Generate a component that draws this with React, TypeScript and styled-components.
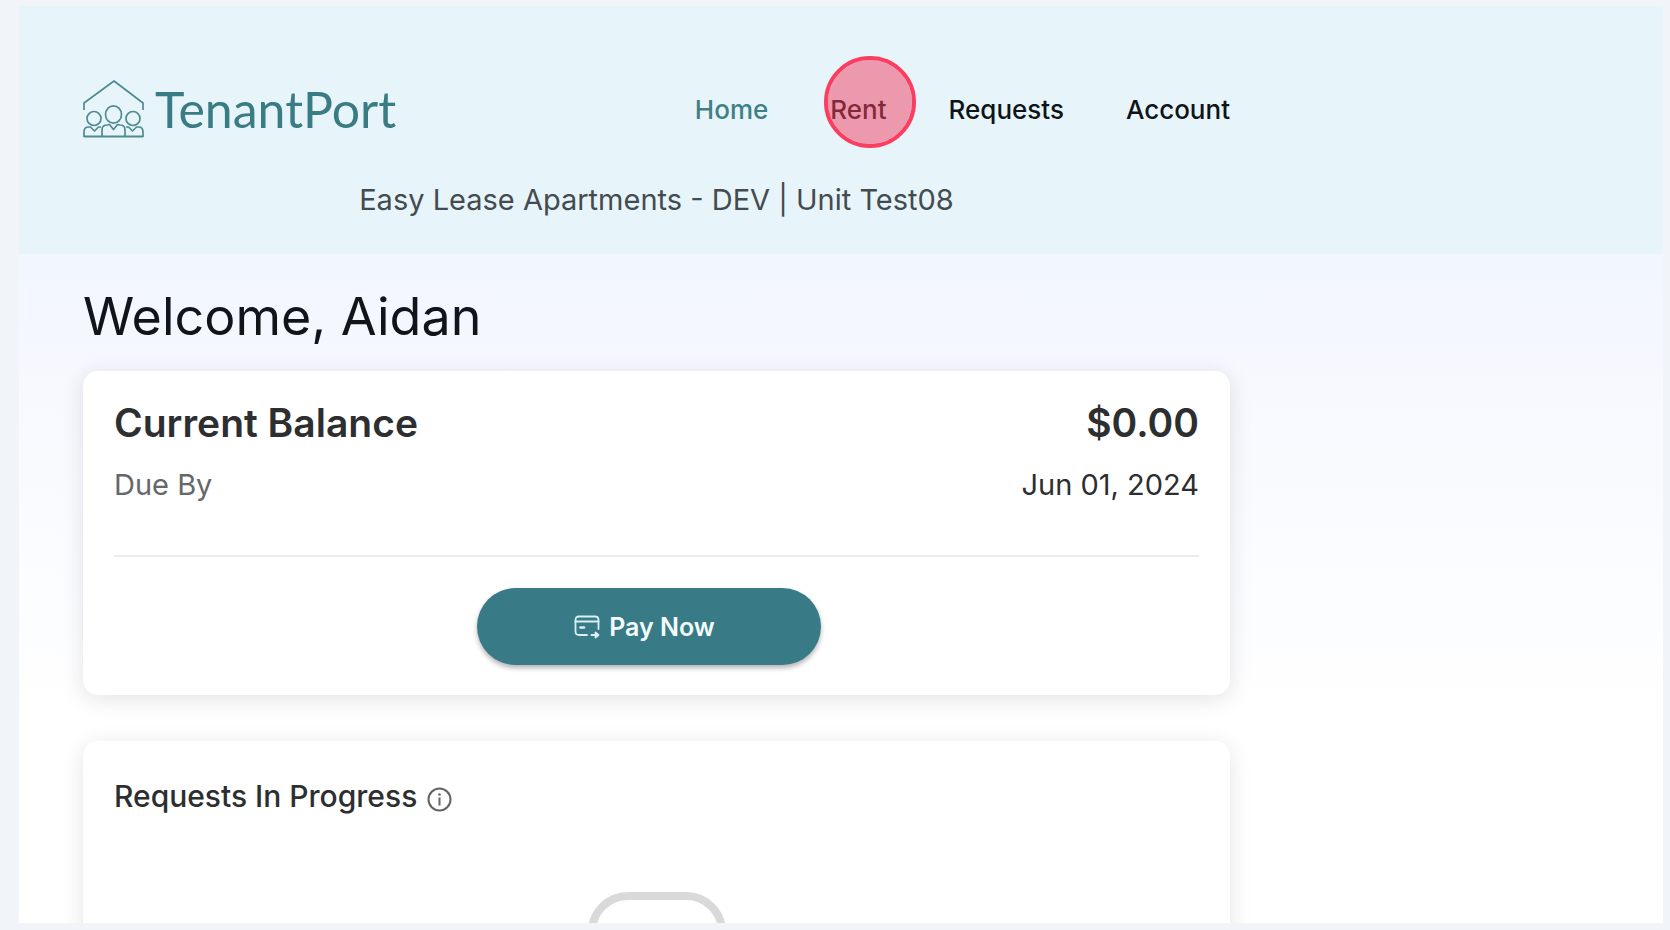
import React from 'react';
import styled, { createGlobalStyle } from 'styled-components';

const GlobalStyle = createGlobalStyle`
  * { box-sizing: border-box; }
  body {
    margin: 0;
    background: #f1f5fa;
    font-family: Inter, "Liberation Sans", sans-serif;
    color: #2d2e30;
  }
  h1, h2, h3, p, ul { margin: 0; padding: 0; font-weight: 400; }
`;

const Frame = styled.div`
  height: calc(100vh - 13px);
  margin: 6px 7px 7px 19px;
  overflow: hidden;
  background: linear-gradient(#f2f6ff 270px, #f8f9fe 400px, #fbfcff 560px, #ffffff 720px);
`;

const Column = styled.div`
  max-width: 1147px;
`;

const Header = styled.header`
  padding: 73px 64px 36px;
  background: #e7f5fb;
`;

const TopRow = styled.div`
  display: flex;
  align-items: center;
  justify-content: space-between;
  height: 60px;
`;

const Brand = styled.a`
  display: flex;
  align-items: center;
  gap: 10px;
  color: #3a7c84;
  font-family: Lato, "Open Sans", sans-serif;
  font-size: 50px;
  line-height: 60px;
  text-decoration: none;
`;

const NavList = styled.ul`
  display: flex;
  gap: 62px;
  padding-top: 2px;
  list-style: none;
`;

const NavItem = styled.li`
  position: relative;
`;

const NavLink = styled.a<{ $active?: boolean }>`
  display: block;
  color: ${({ $active }) => ($active ? '#3f7f86' : '#0f1417')};
  font-size: 26px;
  font-weight: 500;
  line-height: 32px;
  text-decoration: none;
`;

const ClickMarker = styled.span`
  position: absolute;
  left: -6px;
  top: -38px;
  width: 92px;
  height: 92px;
  border: 4px solid #fb3d60;
  border-radius: 50%;
  background: rgba(243, 62, 96, 0.5);
  background-clip: padding-box;
  pointer-events: none;
`;

const Property = styled.p`
  margin-top: 43px;
  color: #444b50;
  font-size: 29px;
  line-height: 36px;
  text-align: center;
`;

const Main = styled.main`
  padding: 33px 64px 0;
`;

const Welcome = styled.h1`
  color: #111418;
  font-size: 52px;
  line-height: 60px;
`;

const Card = styled.section`
  margin-top: 24px;
  padding: 28px 31px 30px;
  border-radius: 15px;
  background: #ffffff;
  box-shadow: 0 4px 22px rgba(30, 32, 40, 0.12);

  & + & {
    margin-top: 46px;
    padding-top: 35px;
  }
`;

const Line = styled.div`
  display: flex;
  align-items: center;
  justify-content: space-between;

  & + & { margin-top: 20px; }
`;

const BalanceTitle = styled.h2`
  font-size: 39px;
  font-weight: 600;
  line-height: 48px;
`;

const Amount = styled.p`
  font-size: 39px;
  font-weight: 600;
  line-height: 48px;
`;

const DueLabel = styled.p`
  color: #666769;
  font-size: 29px;
  line-height: 36px;
`;

const DueDate = styled.p`
  font-size: 29px;
  line-height: 36px;
`;

const Divider = styled.hr`
  height: 2px;
  margin: 52px 0 31px;
  border: 0;
  background: #ececee;
`;

const Actions = styled.div`
  display: flex;
  justify-content: center;
  padding-right: 16px;
`;

const PayButton = styled.button`
  display: flex;
  align-items: center;
  justify-content: center;
  gap: 9px;
  width: 344px;
  height: 77px;
  padding: 0 8px 0 0;
  border: 0;
  border-radius: 39px;
  background: #387b86;
  box-shadow: 0 3px 5px rgba(0, 0, 0, 0.3);
  color: #f4fbfc;
  font-family: inherit;
  font-size: 25px;
  font-weight: 600;
  line-height: 32px;
`;

const SectionHead = styled.div`
  display: flex;
  align-items: center;
  gap: 10px;
`;

const SectionTitle = styled.h2`
  font-size: 30px;
  font-weight: 500;
  line-height: 40px;
`;

const InfoButton = styled.button`
  display: flex;
  padding: 6px 0 0;
  border: 0;
  background: none;
  color: #626365;
`;

const EmptyIcon = styled.div`
  width: 138px;
  height: 138px;
  margin: 76px auto 0;
  border: 8px solid #d9d9d9;
  border-radius: 40px;
`;

const HouseLogo = () => (
  <svg width="62" height="60" viewBox="0 0 62 60" fill="none" stroke="#4f8a90" strokeWidth="1.7" strokeLinejoin="round" aria-hidden="true">
    <path d="M1 31V24L31 2L60 24V31" />
    <circle cx="11" cy="39.500" r="7" />
    <circle cx="50" cy="39.500" r="7" />
    <ellipse cx="30.500" cy="35.500" rx="8" ry="8.700" />
    <path d="M1 58V53Q1 48 5.500 48H7.500L11.500 52L15.500 48H18" />
    <path d="M60 58V53Q60 48 55.500 48H53.500L49.500 52L45.500 48H43" />
    <path d="M19 58V51Q19 46 24 46L26.500 45.500L30.500 50.500L34.500 45.500L37 46Q42 46 42 51V58" />
    <path d="M1 57.500H60" strokeWidth="2" />
  </svg>
);

const PayIcon = () => (
  <svg width="26" height="24" viewBox="0 0 26 24" fill="none" stroke="#d9f1f4" strokeWidth="1.8" strokeLinecap="round" strokeLinejoin="round" aria-hidden="true">
    <path d="M13 20H5Q1.500 20 1.500 16.500V5Q1.500 1.500 5 1.500H21Q24.500 1.500 24.500 5V14" />
    <path d="M1.500 6.500H24.500" />
    <path d="M6.500 12.500H10" strokeWidth="2.600" />
    <path d="M17.500 20H24" strokeWidth="2" />
    <path d="M21.500 17.500L24.500 20L21.500 22.500Z" fill="#d9f1f4" />
  </svg>
);

const InfoIcon = () => (
  <svg width="25" height="25" viewBox="0 0 25 25" fill="none" stroke="currentColor" strokeWidth="2" aria-hidden="true">
    <circle cx="12.500" cy="12.500" r="11" />
    <path d="M12.500 10.500V18.500" />
    <circle cx="12.500" cy="7.500" r="1.300" fill="currentColor" stroke="none" />
  </svg>
);

const links = ['Home', 'Rent', 'Requests', 'Account'];

export default function App() {
  return (
    <>
      <GlobalStyle />
      <Frame>
        <Header>
          <Column>
            <TopRow>
              <Brand href="#home">
                <HouseLogo />
                TenantPort
              </Brand>
              <nav aria-label="Main">
                <NavList>
                  {links.map((label) => (
                    <NavItem key={label}>
                      <NavLink href={`#${label.toLowerCase()}`} $active={label === 'Home'}>
                        {label}
                      </NavLink>
                      {label === 'Rent' && <ClickMarker />}
                    </NavItem>
                  ))}
                </NavList>
              </nav>
            </TopRow>
            <Property>Easy Lease Apartments - DEV | Unit Test08</Property>
          </Column>
        </Header>
        <Main>
          <Column>
            <Welcome>Welcome, Aidan</Welcome>
            <Card>
              <Line>
                <BalanceTitle>Current Balance</BalanceTitle>
                <Amount>$0.00</Amount>
              </Line>
              <Line>
                <DueLabel>Due By</DueLabel>
                <DueDate>Jun 01, 2024</DueDate>
              </Line>
              <Divider />
              <Actions>
                <PayButton type="button">
                  <PayIcon />
                  Pay Now
                </PayButton>
              </Actions>
            </Card>
            <Card>
              <SectionHead>
                <SectionTitle>Requests In Progress</SectionTitle>
                <InfoButton type="button" aria-label="About requests in progress">
                  <InfoIcon />
                </InfoButton>
              </SectionHead>
              <EmptyIcon />
            </Card>
          </Column>
        </Main>
      </Frame>
    </>
  );
}
